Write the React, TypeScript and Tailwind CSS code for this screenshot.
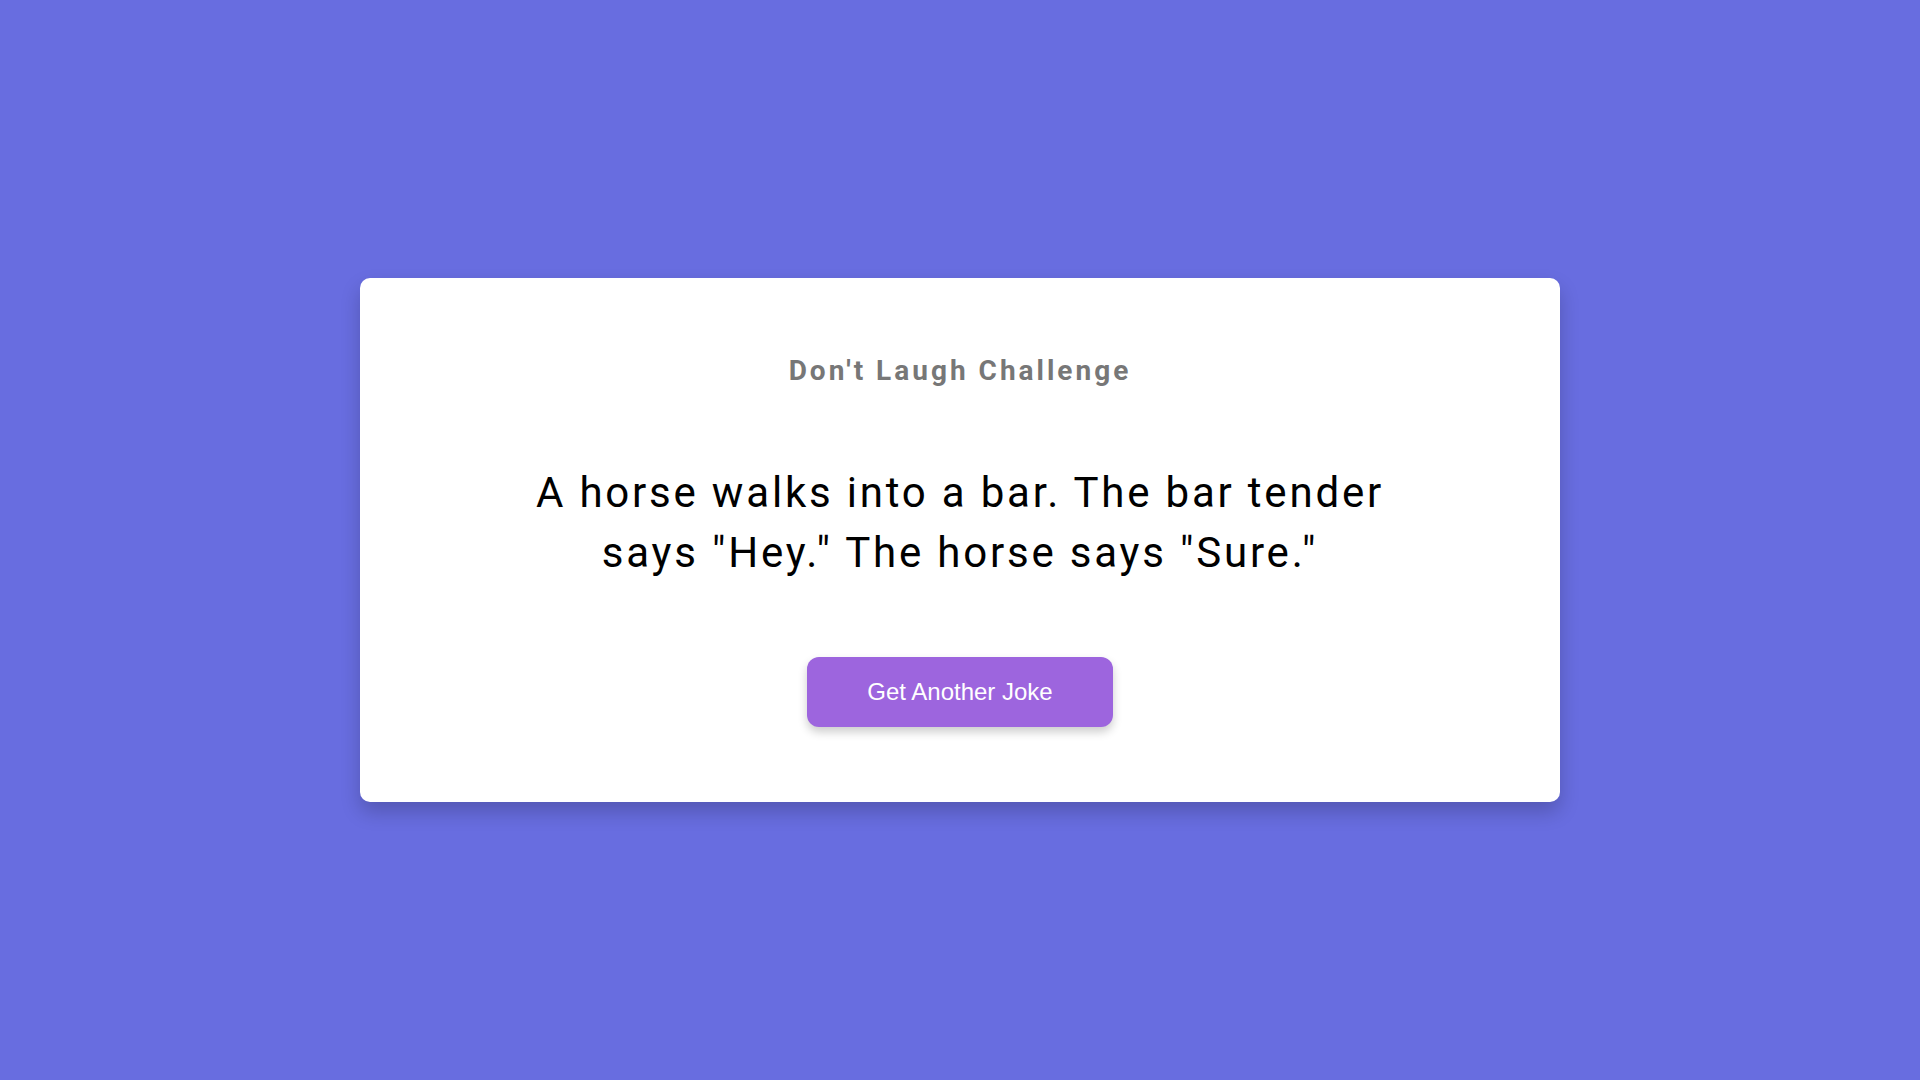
import React from "react";

export default function App() {
  return (
    <div className="min-h-screen w-full bg-[#686de0] flex items-center justify-center">
      <div className="w-[1200px] h-[524px] bg-white rounded-[10px] shadow-[0_10px_20px_rgba(0,0,0,0.2)] flex flex-col items-center pt-[76px] px-[150px]">
        <h3 className="font-['Roboto',sans-serif] font-bold text-[28px] leading-[33px] tracking-[3px] text-[#777777]">
          Don't Laugh Challenge
        </h3>
        <p className="mt-[76px] max-w-[900px] text-center font-['Roboto',sans-serif] text-[42px] leading-[60px] tracking-[2.8px] text-black">
          A horse walks into a bar. The bar tender says "Hey." The horse says "Sure."
        </p>
        <button className="mt-[74px] w-[306px] h-[70px] rounded-[12px] bg-[#9d65de] text-white font-['Liberation_Sans',Arial,sans-serif] text-[24px] shadow-[0_5px_10px_rgba(0,0,0,0.2)]">
          Get Another Joke
        </button>
      </div>
    </div>
  );
}
